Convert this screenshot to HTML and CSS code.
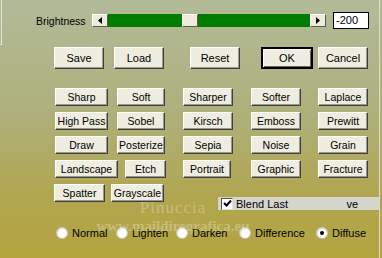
FILE: index.html
```html
<!DOCTYPE html>
<html lang="en">
<head>
  <meta charset="UTF-8">
  <title>Brightness</title>
  <link rel="stylesheet" href="styles.css">
</head>
<body>
  <div class="panel">
    <div class="slider-row">
      <span class="label">Brightness</span>
      <div class="scrollbar">
        <span class="arrow"><svg width="4" height="7" viewBox="0 0 4 7"><path d="M4 0V7L0 3.5Z" fill="#000"/></svg></span>
        <div class="track"><span class="thumb"></span></div>
        <span class="arrow"><svg width="4" height="7" viewBox="0 0 4 7"><path d="M0 0V7L4 3.5Z" fill="#000"/></svg></span>
      </div>
      <div class="value">-200</div>
    </div>

    <div class="actions">
      <button class="btn big">Save</button>
      <button class="btn big load">Load</button>
      <button class="btn big reset">Reset</button>
      <button class="btn big ok">OK</button>
      <button class="btn big cancel">Cancel</button>
    </div>

    <div class="filters">
      <button class="btn">Sharp</button>
      <button class="btn">Soft</button>
      <button class="btn">Sharper</button>
      <button class="btn">Softer</button>
      <button class="btn">Laplace</button>

      <button class="btn">High Pass</button>
      <button class="btn">Sobel</button>
      <button class="btn">Kirsch</button>
      <button class="btn">Emboss</button>
      <button class="btn">Prewitt</button>

      <button class="btn">Draw</button>
      <button class="btn">Posterize</button>
      <button class="btn">Sepia</button>
      <button class="btn">Noise</button>
      <button class="btn">Grain</button>

      <div class="pair">
        <button class="btn landscape">Landscape</button>
        <button class="btn etch">Etch</button>
      </div>
      <button class="btn">Portrait</button>
      <button class="btn">Graphic</button>
      <button class="btn">Fracture</button>

      <div class="pair">
        <button class="btn spatter">Spatter</button>
        <button class="btn grayscale">Grayscale</button>
      </div>
      <div class="blend">
        <span class="check"><svg width="9" height="9" viewBox="0 0 9 9"><path d="M1 4L3.5 6.5L8 1.5" stroke="#000" stroke-width="2" fill="none"/></svg></span>
        <span>Blend Last</span>
        <span class="cut">ve</span>
      </div>
    </div>

    <div class="modes">
      <label class="mode normal"><span class="radio"></span>Normal</label>
      <label class="mode lighten"><span class="radio"></span>Lighten</label>
      <label class="mode darken"><span class="radio"></span>Darken</label>
      <label class="mode difference"><span class="radio"></span>Difference</label>
      <label class="mode"><span class="radio on"></span>Diffuse</label>
    </div>

    <div class="watermark">
      <span class="wm-name">Pinuccia</span>
      <span class="wm-site">www.maildiregrafica.eu</span>
    </div>
  </div>
</body>
</html>
```

FILE: styles.css
```css
body {
  margin: 0;
  width: 382px;
  height: 258px;
  overflow: hidden;
  font-family: 'Liberation Sans', Arial, sans-serif;
  font-size: 10.5px;
  color: #000;
  background: linear-gradient(#b2ba99, #aeb07a 45%, #b1a651 75%, #b4a53e);
}
.panel {
  position: relative;
  box-sizing: border-box;
  width: 380px;
  height: 258px;
  padding: 12px 0 0 36px;
  border-right: 1px solid #d9dccb;
}
.panel::before {
  content: '';
  position: absolute;
  left: 0;
  top: 0;
  width: 1px;
  height: 44px;
  border-right: 1px solid #e4e6d8;
  border-bottom: 1px solid #e4e6d8;
}

/* slider */
.slider-row {
  display: flex;
  align-items: center;
  height: 17px;
}
.label {
  width: 56px;
}
.scrollbar {
  display: flex;
  width: 234px;
  height: 13px;
}
.arrow, .thumb {
  display: flex;
  align-items: center;
  justify-content: center;
  box-sizing: border-box;
  width: 16px;
  height: 13px;
  background: #eeebdd;
  border: 1px solid;
  border-color: #fff #5a5a50 #5a5a50 #fff;
}
.track {
  display: flex;
  flex: 1;
  background: #007d00;
}
.thumb {
  margin-left: 74px;
}
.value {
  box-sizing: border-box;
  width: 36px;
  height: 17px;
  margin-left: 7px;
  padding: 1px 0 0 2px;
  background: #fff;
  border: 1px solid #000;
  font-size: 11px;
}

/* buttons */
.btn {
  box-sizing: border-box;
  width: 50px;
  height: 18px;
  padding: 0;
  font-family: inherit;
  font-size: 10.5px;
  color: #000;
  background: #efede0;
  border: 1px solid;
  border-color: #fff #404040 #404040 #fff;
  box-shadow: inset -1px -1px #9a988c;
}
.actions {
  display: flex;
  margin: 18px 0 0 18px;
}
.btn.big {
  height: 22px;
  font-size: 11px;
}
.load { margin-left: 10px; }
.reset { margin-left: 26px; }
.ok {
  width: 52px;
  margin-left: 21px;
  border: 2px solid #000;
  box-shadow: inset 1px 1px #fff, inset -1px -1px #6a685c;
}
.cancel { margin-left: 5px; }

.filters {
  display: grid;
  grid-template-columns: 62px 66px 68px 67px 50px;
  grid-auto-rows: 18px;
  row-gap: 6px;
  margin: 19px 0 0 19px;
}
.filters > .btn:nth-child(5n+1) { width: 53px; }
.filters > .btn:nth-child(5n+2) { width: 48px; }
.pair {
  display: flex;
  grid-column: span 2;
}
.landscape { width: 63px; }
.etch { width: 41px; margin-left: 7px; }
.spatter { width: 51px; margin-left: -1px; }
.grayscale { width: 53px; margin-left: 6px; }

.blend {
  grid-column: span 3;
  display: flex;
  align-items: center;
  width: 162px;
  height: 13px;
  margin: 13px 0 0 35px;
  padding-left: 3px;
  box-sizing: border-box;
  background: #d6d5cc;
  font-size: 11px;
}
.check {
  display: flex;
  align-items: center;
  justify-content: center;
  box-sizing: border-box;
  width: 12px;
  height: 12px;
  margin-right: 3px;
  background: #fff;
  border: 1px solid;
  border-color: #555 #e0e0e0 #e0e0e0 #555;
}
.cut {
  margin-left: auto;
  margin-right: 22px;
}

/* blend modes */
.modes {
  display: flex;
  align-items: center;
  margin: 25px 0 0 20px;
}
.mode {
  display: flex;
  align-items: center;
  gap: 4px;
  font-size: 11px;
}
.normal, .lighten { width: 60px; }
.darken { width: 63px; }
.difference { width: 77px; }
.radio {
  display: flex;
  align-items: center;
  justify-content: center;
  box-sizing: border-box;
  width: 12px;
  height: 12px;
  border-radius: 50%;
  border: 1px solid #c8c8c4;
  background: radial-gradient(circle at 60% 60%, #fff 45%, #dcdcdc 80%, #b8b8b8);
}
.radio.on::after {
  content: '';
  width: 4px;
  height: 4px;
  border-radius: 50%;
  background: #000;
}

/* watermark */
.watermark {
  position: absolute;
  left: 78px;
  top: 199px;
  display: flex;
  flex-direction: column;
  align-items: center;
  gap: 3px;
  width: 190px;
  color: rgba(255, 255, 255, 0.28);
  font-family: 'Liberation Serif', serif;
  pointer-events: none;
}
.wm-name {
  font-size: 17px;
  line-height: 17px;
  letter-spacing: 1px;
}
.wm-site {
  font-size: 15px;
  line-height: 15px;
  font-weight: bold;
}
```
